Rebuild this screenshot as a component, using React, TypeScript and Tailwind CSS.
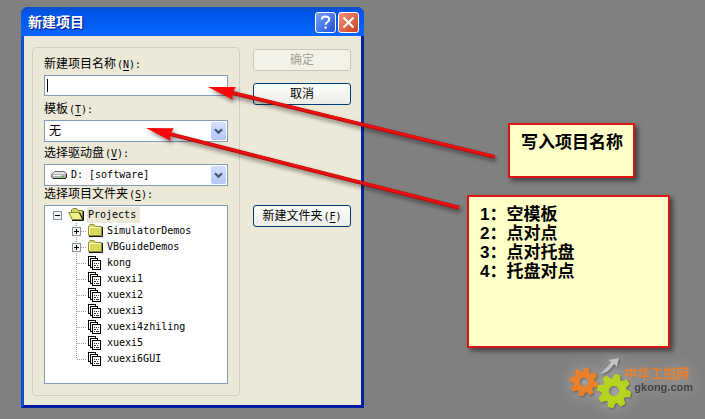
import type { ReactNode } from "react";

const CHILD_FOLDERS = ["SimulatorDemos", "VBGuideDemos"];
const PROJECTS = ["kong", "xuexi1", "xuexi2", "xuexi3", "xuexi4zhiling", "xuexi5", "xuexi6GUI"];
const TEMPLATES = ["空模板", "点对点", "点对托盘", "托盘对点"];

const GEAR_ANGLES = [0, 45, 90, 135, 180, 225, 270, 315];

function Toggle({ open }: { open?: boolean }) {
  return (
    <g shapeRendering="crispEdges">
      <rect x="0.5" y="0.5" width="8" height="8" rx="1" fill="#f4f3ee" stroke="#7b94ab" />
      <path d="M2 4.5h5" stroke="#000" />
      {!open && <path d="M4.5 2v5" stroke="#000" />}
    </g>
  );
}

function Branch({ folder, last }: { folder?: boolean; last?: boolean }) {
  return (
    <svg className="h-4 w-4 shrink-0" viewBox="0 0 16 16" aria-hidden="true">
      <g stroke="#a0a0a0" strokeDasharray="1 1" shapeRendering="crispEdges">
        <path d={last ? "M5.5 0v8" : "M5.5 0v16"} />
        <path d="M6 8.5h10" />
      </g>
      {folder && (
        <g transform="translate(1 4)">
          <Toggle />
        </g>
      )}
    </svg>
  );
}

function FolderIcon() {
  return (
    <svg className="h-4 w-4 shrink-0" viewBox="0 0 16 16" aria-hidden="true">
      <path d="M1.5 3.5V12.5H14.5V3.5H8.5L7 1.5H3L1.5 3.5Z" fill="#d9d95c" stroke="#8c8c3c" />
      <path d="M2.5 11.5V4.5H13.5" stroke="#ffffb4" fill="none" />
      <path d="M2 13.5H15.5V4" stroke="#111" fill="none" />
    </svg>
  );
}

function OpenFolderIcon() {
  return (
    <svg className="h-4 w-4 shrink-0" viewBox="0 0 16 16" aria-hidden="true">
      <path d="M3.5 11V3L5 1.5H8.5L10 3.5H14.5V12.5H5Z" fill="#d6d65a" stroke="#84843a" />
      <path d="M0.8 5.5H11L14.5 12.5H4.2Z" fill="#f0f088" stroke="#84843a" />
      <path d="M4 13.5H15.5V4M11.5 5.5L15 12.5" stroke="#111" fill="none" />
    </svg>
  );
}

function ProjectIcon() {
  return (
    <svg className="h-4 w-4 shrink-0" viewBox="0 0 16 16" shapeRendering="crispEdges" aria-hidden="true">
      <g fill="#fff" stroke="#000">
        <path d="M1.5 1.5H8.5V10.5H1.5Z" />
        <path d="M3.5 3.5H10.5V12.5H3.5Z" />
        <path d="M5.5 5.5H13.5V14.5H5.5Z" />
      </g>
      <path d="M7 8.5h1M9 8.5h1M11 8.5h1M7 10.5h2M10 10.5h1M7 12.5h1M9 12.5h3" stroke="#333" />
    </svg>
  );
}

function DriveIcon() {
  return (
    <svg className="pointer-events-none absolute left-[7px] top-[5px] h-3 w-4" viewBox="0 0 16 12" aria-hidden="true">
      <path d="M3.5 2.5H13L15.5 4.5V8.5L14 9.5H2L0.5 8.5V5.5Z" fill="#b4b4b4" stroke="#707070" />
      <path d="M3.5 3H12.8L14.8 5H1.5Z" fill="#e4e4e4" />
      <path d="M2 9.5H14L15.5 8.5V5" stroke="#222" fill="none" />
      <path d="M2 6.5h8" stroke="#f4f4f4" />
      <path d="M11 7.5h2" stroke="#3aa83a" />
    </svg>
  );
}

/* half-width text, sits beside 12px Chinese */
function Latin({ children }: { children: ReactNode }) {
  return <span className="ml-px font-['DejaVu_Sans_Mono',monospace] text-[10px] leading-none">{children}</span>;
}

function Mnemonic({ letter, colon }: { letter: string; colon?: boolean }) {
  return (
    <Latin>
      (<u className="underline-offset-2">{letter}</u>){colon && ":"}
    </Latin>
  );
}

type SelectBoxProps = { id: string; value: string; icon?: ReactNode; className: string };

function SelectBox({ id, value, icon, className }: SelectBoxProps) {
  return (
    <div className="relative">
      <select
        id={id}
        className={`block h-[22px] w-full appearance-none border border-[#7f9db9] bg-white pr-5 leading-5 ${className}`}
      >
        <option>{value}</option>
      </select>
      {icon}
      <span className="pointer-events-none absolute right-[2px] top-[2px] flex h-[18px] w-[15px] items-center justify-center rounded-xs bg-linear-to-b from-[#d3e0fd] to-[#b3c8f6]">
        <svg className="h-[7px] w-[9px]" viewBox="0 0 9 7" aria-hidden="true">
          <path d="M1 1.2L4.5 4.7L8 1.2" stroke="#44587c" strokeWidth="2.2" fill="none" />
        </svg>
      </span>
    </div>
  );
}

const BUTTON = "h-[22px] w-full rounded-[3px] border text-xs leading-5";
const BUTTON_ON = "border-[#003c74] bg-linear-to-b from-white to-[#ecebe5] text-black";
const LABEL = "mb-[3px] block h-4 text-xs leading-4";
const CALLOUT =
  "border-2 border-[#d81414] bg-[#ffffc8] pl-[11px] text-[17px] font-bold leading-[19px] shadow-[3px_3px_5px_rgba(0,0,0,0.5)]";

function Dialog() {
  return (
    <section
      role="dialog"
      aria-labelledby="dialog-title"
      className="w-[343px] shrink-0 overflow-hidden rounded-t-[7px] bg-[#0a3fd0] font-['Liberation_Sans','Noto_Sans_CJK_SC',sans-serif]"
    >
      <header className="flex h-[29px] items-center gap-[2px] bg-linear-to-b from-[#0a4fc8] via-[#0055e8] via-20% to-[#0566ff] pl-[7px] pr-[5px] pt-px">
        <h1
          id="dialog-title"
          className="flex-1 text-sm font-bold text-white [text-shadow:1px_1px_1px_#0a1883]"
        >
          新建项目
        </h1>
        <button
          type="button"
          aria-label="帮助"
          className="flex h-[21px] w-[21px] items-center justify-center rounded-[3px] border border-white bg-linear-to-br from-[#7aa0f4] to-[#1e50d8] text-white"
        >
          <svg className="h-[15px] w-[15px]" viewBox="0 0 15 15" fill="none" aria-hidden="true">
            <path d="M3.8 4.6C3.8 2.6 5.3 1.5 7.4 1.5C9.6 1.5 11.2 2.7 11.2 4.6C11.2 7 7.6 7 7.6 9.8" stroke="#fff" strokeWidth="2" />
            <path d="M7.6 11.5v2.2" stroke="#fff" strokeWidth="2.2" />
          </svg>
        </button>
        <button
          type="button"
          aria-label="关闭"
          className="flex h-[21px] w-[21px] items-center justify-center rounded-[3px] border border-white bg-linear-to-br from-[#f0937a] to-[#cc3a12]"
        >
          <svg className="h-[13px] w-[13px]" viewBox="0 0 13 13" aria-hidden="true">
            <path d="M1.5 1.5L11.5 11.5M11.5 1.5L1.5 11.5" stroke="#fff" strokeWidth="2.2" />
          </svg>
        </button>
      </header>

      <form className="flex items-start gap-[13px] border-x-[3px] border-b-[3px] border-b-[#001ea0] border-l-[#0c50dc] border-r-[#0424a8] bg-[#ece9d8] pb-[9px] pl-2 pr-2.5 pt-[11px]">
        <div className="w-[208px] rounded border border-[#d0d0bf] px-[11px] pb-[11px] pt-2">
          <label htmlFor="name" className={LABEL}>
            新建项目名称
            <Mnemonic letter="N" colon />
          </label>
          <div className="relative">
            <input id="name" type="text" className="block h-[21px] w-full border border-[#7f9db9] bg-white px-1 text-xs" />
            <span className="pointer-events-none absolute left-[3px] top-1 h-[13px] w-px bg-black" />
          </div>

          <label htmlFor="template" className={`${LABEL} mt-[5px]`}>
            模板
            <Mnemonic letter="T" colon />
          </label>
          <SelectBox id="template" value="无" className="pl-1 text-xs" />

          <label htmlFor="drive" className={`${LABEL} mt-[3px]`}>
            选择驱动盘
            <Mnemonic letter="V" colon />
          </label>
          <SelectBox
            id="drive"
            value="D: [software]"
            className="pl-[26px] font-['DejaVu_Sans_Mono',monospace] text-[10px]"
            icon={<DriveIcon />}
          />

          <h2 id="tree-label" className={LABEL}>
            选择项目文件夹
            <Mnemonic letter="S" colon />
          </h2>
          <ul
            role="tree"
            aria-labelledby="tree-label"
            className="border border-[#7f9db9] bg-white pb-4 pt-px font-['DejaVu_Sans_Mono',monospace] text-[10px] leading-4"
          >
            <li role="treeitem" aria-expanded="true">
              <div className="flex items-center pl-2">
                <svg className="mr-1.5 h-[9px] w-[9px]" viewBox="0 0 9 9" aria-hidden="true">
                  <Toggle open />
                </svg>
                <OpenFolderIcon />
                <span className="ml-[3px] bg-[#ece9d8] pl-px pr-1">Projects</span>
              </div>
              <ul role="group" className="pl-[26px]">
                {CHILD_FOLDERS.map((name) => (
                  <li key={name} role="treeitem" aria-expanded="false" className="flex">
                    <Branch folder />
                    <FolderIcon />
                    <span className="pl-1">{name}</span>
                  </li>
                ))}
                {PROJECTS.map((name, i) => (
                  <li key={name} role="treeitem" className="flex">
                    <Branch last={i === PROJECTS.length - 1} />
                    <ProjectIcon />
                    <span className="pl-1">{name}</span>
                  </li>
                ))}
              </ul>
            </li>
          </ul>
        </div>

        <div className="flex flex-1 flex-col gap-3 pt-0.5">
          <button type="button" disabled className={`${BUTTON} border-[#c9c7ba] bg-[#f3f2e9] text-[#a1a192]`}>
            确定
          </button>
          <button type="button" className={`${BUTTON} ${BUTTON_ON}`}>
            取消
          </button>
          <button type="button" className={`${BUTTON} ${BUTTON_ON} mt-[88px]`}>
            新建文件夹
            <Mnemonic letter="F" />
          </button>
        </div>
      </form>
    </section>
  );
}

function Gear({ x, y, size, color }: { x: number; y: number; size: number; color: string }) {
  return (
    <g transform={`translate(${x} ${y}) scale(${size})`}>
      <circle r="8.3" fill="none" stroke={color} strokeWidth="7" />
      {GEAR_ANGLES.map((angle) => (
        <path key={angle} d="M-4 -10L-2.6 -16H2.6L4 -10Z" fill={color} transform={`rotate(${angle + 12})`} />
      ))}
    </g>
  );
}

function Logo() {
  return (
    <div className="flex items-start drop-shadow-[0_0_7px_rgba(255,255,255,0.35)]">
      <svg className="h-[60px] w-[66px] shrink-0 drop-shadow-[1px_1px_1px_rgba(60,60,60,0.6)]" viewBox="0 0 66 60" aria-hidden="true">
        <path d="M32 20C39 19 43 15 46 10L49 13L51 4L40 6L43 8C40 12 37 16 32 20Z" fill="#c4c4c4" />
        <Gear x={16} y={28} size={0.9} color="#e8802c" />
        <Gear x={46} y={37} size={1.06} color="#b4d420" />
      </svg>
      <p className="-ml-2.5 pt-[13px] text-[13px] font-bold leading-[14px] text-[#e8802c]">
        中华工控网
        <span className="block pl-2.5 text-[11px] leading-3 text-[#444]">gkong.com</span>
      </p>
    </div>
  );
}

function Arrow({ x, y, angle, length }: { x: number; y: number; angle: number; length: number }) {
  return (
    <g transform={`translate(${x} ${y}) rotate(${angle})`}>
      <path d={`M24 0H${length}`} stroke="#b80c0c" strokeWidth="4" />
      <path d={`M24 -0.3H${length}`} stroke="#e81010" strokeWidth="2.6" />
      <path d="M0 0L27 -6.5L25 0L27 6.5Z" fill="#f80808" />
    </g>
  );
}

export default function App() {
  return (
    <main className="relative flex min-h-screen items-start overflow-hidden bg-[#808080] pl-[21px] pt-[7px] font-['Liberation_Sans','Noto_Sans_CJK_SC',sans-serif] text-black">
      <Dialog />

      <aside className="flex flex-1 flex-col pl-[103px] pt-[116px]">
        <p className={`${CALLOUT} ml-[41px] h-[55px] w-[127px] pt-2`}>写入项目名称</p>
        <ol className={`${CALLOUT} mt-[17px] h-[153px] w-[203px] pt-2`}>
          {TEMPLATES.map((name, i) => (
            <li key={name}>
              {i + 1}：{name}
            </li>
          ))}
        </ol>
        <div className="mr-3 mt-1.5 self-end">
          <Logo />
        </div>
      </aside>

      {/* callout pointers, drawn over the dialog */}
      <svg
        className="pointer-events-none absolute left-0 top-0 h-[419px] w-[705px] drop-shadow-[2px_3px_2px_rgba(0,0,0,0.45)]"
        viewBox="0 0 705 419"
        aria-hidden="true"
      >
        <Arrow x={208} y={87} angle={13.7} length={295} />
        <Arrow x={146} y={128} angle={14.3} length={323} />
      </svg>
    </main>
  );
}
